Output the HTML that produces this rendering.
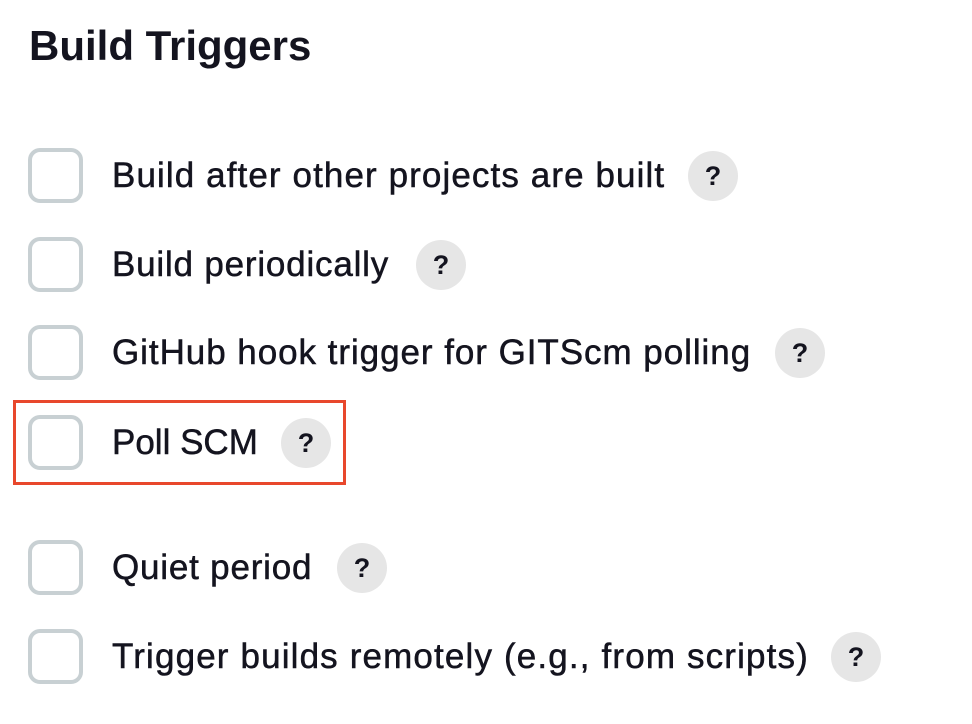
<!DOCTYPE html>
<html><head><meta charset="utf-8"><style>
html,body{margin:0;padding:0;background:#fff;width:972px;height:724px;overflow:hidden;position:relative;font-family:"Liberation Sans",sans-serif;color:#14141f}
h1{position:absolute;left:29px;top:20px;margin:0;font-size:42px;font-weight:bold;line-height:52px;letter-spacing:0px}
.cb{position:absolute;left:28px;width:47px;height:47px;border:4px solid #c8d0d3;border-radius:12px;box-sizing:content-box}
.t{position:absolute;left:112px;font-size:35px;line-height:40px;white-space:nowrap;letter-spacing:1.1px;-webkit-text-stroke:0.5px #14141f}
.h{position:absolute;width:50px;height:50px;border-radius:50%;background:#e6e6e6;font-weight:bold;font-size:27px;line-height:50px;text-align:center;color:#14141f}
.red{position:absolute;left:13px;top:400px;width:327px;height:79px;border:3px solid #e8472c}
</style></head><body>
<h1>Build Triggers</h1>

<div class="cb" style="top:148px"></div><div class="t" style="top:156px">Build after other projects are built</div><div class="h" style="left:688px;top:151px">?</div>
<div class="cb" style="top:237px"></div><div class="t" style="top:245px;letter-spacing:0.8px">Build periodically</div><div class="h" style="left:416px;top:240px">?</div>
<div class="cb" style="top:325px"></div><div class="t" style="top:333px;letter-spacing:0.95px">GitHub hook trigger for GITScm polling</div><div class="h" style="left:775px;top:328px">?</div>
<div class="red"></div>
<div class="cb" style="top:415px"></div><div class="t" style="top:423px;letter-spacing:0">Poll SCM</div><div class="h" style="left:281px;top:418px">?</div>
<div class="cb" style="top:540px"></div><div class="t" style="top:548px;letter-spacing:0.8px">Quiet period</div><div class="h" style="left:337px;top:543px">?</div>
<div class="cb" style="top:629px"></div><div class="t" style="top:637px;letter-spacing:1.15px">Trigger builds remotely (e.g., from scripts)</div><div class="h" style="left:831px;top:632px">?</div>
</body></html>
